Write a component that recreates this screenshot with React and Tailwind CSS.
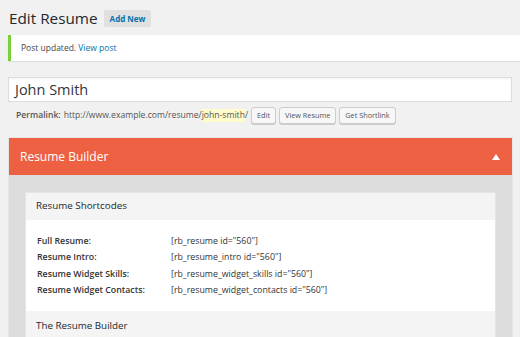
import React from 'react';

const shortcodes = [
  { label: 'Full Resume:', code: '[rb_resume id="560"]' },
  { label: 'Resume Intro:', code: '[rb_resume_intro id="560"]' },
  { label: 'Resume Widget Skills:', code: '[rb_resume_widget_skills id="560"]' },
  { label: 'Resume Widget Contacts:', code: '[rb_resume_widget_contacts id="560"]' },
];

const App = () => {
  return (
    <div className="h-[337px] w-[520px] overflow-hidden bg-[#f1f1f1] font-['Open_Sans',sans-serif] text-[#444]">
      {/* Title row */}
      <div className="flex items-center gap-[6px] pl-[9px] pt-[7px]">
        <h1 className="text-[15.3px] leading-[22px] text-[#23282d]">Edit Resume</h1>
        <span className="rounded-[2px] bg-[#e0e0e0] px-[6px] py-[2px] text-[8px] font-bold leading-[13px] text-[#0073aa]">
          Add New
        </span>
      </div>

      {/* Notice */}
      <div className="ml-[8px] mt-[6px] flex h-[26px] items-center border-l-[3px] border-[#7ad03a] bg-white pl-[10px] shadow-[0_1px_1px_rgba(0,0,0,0.08)]">
        <p className="text-[8.5px] text-[#444]">
          Post updated. <span className="text-[#0073aa]">View post</span>
        </p>
      </div>

      {/* Title input */}
      <div className="ml-[8px] mr-[8px] mt-[16px] flex h-[25px] items-center border border-[#ddd] bg-white pl-[6px] shadow-[inset_0_1px_2px_rgba(0,0,0,0.05)]">
        <span className="text-[14.5px] text-[#32373c]">John Smith</span>
      </div>

      {/* Permalink */}
      <div className="mt-[5px] flex items-center pl-[16px] text-[8.6px] text-[#555]">
        <span className="font-semibold">Permalink:</span>
        <span className="ml-[3px]">http://www.example.com/resume/</span>
        <span className="bg-[#fffbcc]">john-smith</span>
        <span>/</span>
        <div className="ml-[3px] flex gap-[3px]">
          <span className="rounded-[3px] border border-[#ccc] bg-[#f7f7f7] px-[5px] py-[2px] text-[7.3px] leading-[11px] text-[#555] shadow-[0_1px_0_#ccc]">Edit</span>
          <span className="rounded-[3px] border border-[#ccc] bg-[#f7f7f7] px-[5px] py-[2px] text-[7.3px] leading-[11px] text-[#555] shadow-[0_1px_0_#ccc]">View Resume</span>
          <span className="rounded-[3px] border border-[#ccc] bg-[#f7f7f7] px-[5px] py-[2px] text-[7.3px] leading-[11px] text-[#555] shadow-[0_1px_0_#ccc]">Get Shortlink</span>
        </div>
      </div>

      {/* Resume Builder box */}
      <div className="ml-[8px] mr-[7px] mt-[13px] border border-[#e5e5e5]">
        <div className="flex h-[37px] items-center justify-between bg-[#ed6142] pl-[11px] pr-[12px]">
          <span className="text-[12px] text-white">Resume Builder</span>
          <svg width="8" height="6" viewBox="0 0 8 6">
            <path d="M4 0 L8 6 L0 6 Z" fill="#fff" />
          </svg>
        </div>
        <div className="bg-[#dcdcdc] pl-[16px] pr-[16px] pt-[17px]">
          <div className="border border-[#e5e5e5]">
            <div className="flex h-[27px] items-center bg-[#f4f4f4] pl-[10px] text-[9.8px] text-[#23282d]">
              Resume Shortcodes
            </div>
            <div className="bg-white pb-[12px] pl-[11px] pt-[13px]">
              {shortcodes.map((s) => (
                <div key={s.label} className="flex h-[16.5px] items-center text-[8.8px] text-[#333]">
                  <span className="w-[134px] font-semibold">{s.label}</span>
                  <span>{s.code}</span>
                </div>
              ))}
            </div>
            <div className="flex h-[30px] items-center bg-[#f4f4f4] pl-[10px] text-[9.8px] text-[#23282d]">
              The Resume Builder
            </div>
          </div>
        </div>
      </div>
    </div>
  );
};

export default App;
